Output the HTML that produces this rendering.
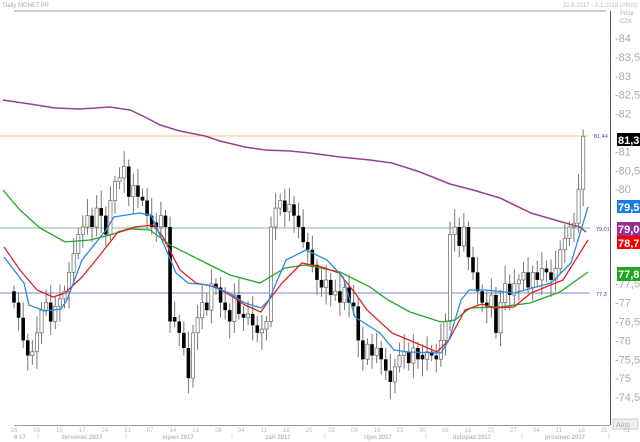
<!DOCTYPE html>
<html><head><meta charset="utf-8"><style>
html,body{margin:0;padding:0;background:#fff;width:640px;height:442px;overflow:hidden}
svg{display:block;font-family:"Liberation Sans",sans-serif}
</style></head><body>
<svg id="s" width="640" height="442" viewBox="0 0 640 442" xmlns="http://www.w3.org/2000/svg">
<rect width="640" height="442" fill="#fff"/>
<text x="3" y="7" font-size="6" fill="#aaa">Daily MONET.PR</text>
<text x="637" y="7" font-size="6" fill="#bbb" text-anchor="end">22.6.2017 - 2.1.2018 (PRG)</text>
<line x1="14" y1="11" x2="606" y2="11" stroke="#999" stroke-width="1"/>
<line x1="610.5" y1="11" x2="610.5" y2="425" stroke="#555" stroke-width="1"/>
<line x1="14" y1="425.5" x2="610" y2="425.5" stroke="#999" stroke-width="1"/>
<text x="620" y="15" font-size="6" fill="#aaa">Price</text>
<text x="620" y="23" font-size="6" fill="#aaa">CZK</text>
<g font-size="11" fill="#aaa" id="yl"></g>
<line x1="0" y1="136" x2="588" y2="136" stroke="#f5c08a" stroke-width="1"/>
<line x1="0" y1="228" x2="590" y2="228" stroke="#7fc27f" stroke-width="1"/>
<line x1="0" y1="293" x2="590" y2="293" stroke="#9a9ae0" stroke-width="1.2"/>
<g id="c"></g>
<polyline fill="none" stroke="#9a3f93" stroke-width="1.5" points="3,100 30,104 55,108 80,109 110,107 130,110 145,117 160,125 180,131 205,136 220,141 245,147 265,150 290,151 310,153 340,157 370,160 392,163 420,172 450,184 473,190 500,198 531,213 555,220 580,227 586,232"/>
<polyline fill="none" stroke="#22a822" stroke-width="1.3" points="3,190 20,210 40,228 65,242 90,240 110,235 130,229 150,230 170,245 200,260 230,275 260,283 285,268 305,265 340,272 370,287 388,300 410,312 441,322 455,320 470,308 500,307 530,303 560,292 588,272"/>
<polyline fill="none" stroke="#e02020" stroke-width="1.3" points="4,247 20,270 37,290 53,297 65,293 82,277 100,255 118,232 135,227 153,225 163,237 180,270 196,283 216,287 233,297 245,305 261,312 269,300 282,283 302,263 322,267 339,273 355,293 367,310 392,333 416,343 437,352 449,340 465,310 482,304 494,308 514,307 531,293 563,280 588,240"/>
<polyline fill="none" stroke="#2a8ae0" stroke-width="1.3" points="4,257 24,283 29,305 45,311 61,309 67,300 82,260 106,230 114,217 139,213 151,215 159,233 176,273 188,283 208,285 229,293 245,303 261,308 269,300 286,260 306,250 327,260 343,277 355,317 380,333 394,350 408,352 441,353 449,340 461,300 469,290 486,290 514,293 551,283 571,263 588,207"/>
<g font-size="5.5" fill="#44a">
<text x="594" y="138">81,44</text><text x="596" y="231">79,01</text><text x="596" y="296">77,3</text>
</g>
<g font-size="11" font-weight="bold">
<rect x="617" y="133" width="23" height="13" fill="#000"/><text x="618" y="144" fill="#fff">81,3</text>
<rect x="617" y="200" width="23" height="13" fill="#1a7be0"/><text x="618" y="211" fill="#fff">79,56</text>
<rect x="617" y="222" width="23" height="14" fill="#9a2f8f"/><text x="618" y="233" fill="#fff">79,06</text>
<rect x="617" y="236" width="23" height="13" fill="#e00"/><text x="618" y="247" fill="#fff">78,7</text>
<rect x="617" y="267" width="23" height="14" fill="#1fa51f"/><text x="618" y="278" fill="#fff">77,8</text>
</g>
<rect x="613" y="419" width="25" height="10" fill="#eee" stroke="#ccc"/>
<text x="616" y="427" font-size="7" fill="#aaa">Auto</text>
<g font-size="6" fill="#bbb" text-anchor="middle" id="xl"></g>
<g font-size="6" fill="#bbb" font-weight="bold" text-anchor="middle">
<text x="20" y="439">6 17</text><text x="82" y="439">červenec 2017</text><text x="178" y="439">srpen 2017</text><text x="278" y="439">září 2017</text><text x="378" y="439">říjen 2017</text><text x="472" y="439">listopad 2017</text><text x="565" y="439">prosinec 2017</text>
</g>
<g stroke="#ddd" stroke-width="1">
<line x1="38" y1="433" x2="38" y2="439"/><line x1="126" y1="433" x2="126" y2="439"/><line x1="232" y1="433" x2="232" y2="439"/><line x1="325" y1="433" x2="325" y2="439"/><line x1="426" y1="433" x2="426" y2="439"/><line x1="522" y1="433" x2="522" y2="439"/><line x1="609" y1="433" x2="609" y2="439"/>
</g>
</svg>
<script>
var NS="http://www.w3.org/2000/svg";
function el(p,t,a,tx){var e=document.createElementNS(NS,t);for(var k in a)e.setAttribute(k,a[k]);if(tx)e.textContent=tx;p.appendChild(e);return e;}
function Y(p){return 38+(84-p)*37.8;}
var yl=document.getElementById('yl');
var labs=["84","83,5","83","82,5","82","81,5","81","80,5","80","79,5","79","78,5","78","77,5","77","76,5","76","75,5","75","74,5"];
for(var i=0;i<labs.length;i++){var p=84-i*0.5;if(labs[i]=="81,5"||labs[i]=="79,5"||labs[i]=="79"||labs[i]=="78,5"||labs[i]=="78")continue;el(yl,'text',{x:615,y:Y(p)+4},'-'+labs[i]);}
var xl=document.getElementById('xl');
var d=["26","03","10","17","24","31","07","14","21","28","04","11","18","25","02","09","16","23","30","06","13","20","27","04","11","18","25","01"];
for(var i=0;i<d.length;i++){el(xl,'text',{x:14+i*22.7,y:432},d[i]);}
var C=[77.0,76.6,76.0,75.6,75.7, 76.2,76.8,77.0,76.5,76.9, 77.1,77.3,77.8,78.3,78.8, 79.0,79.3,79.0,79.5,79.3, 78.8,79.7,80.2,80.3,80.6, 79.8,80.1,79.8,79.7,79.3, 79.0,79.0,79.3,79.0,76.5, 76.5,76.2,75.8,75.0,76.2, 76.6,77.0,76.8,77.5,77.4, 77.0,76.8,76.5,77.2,76.7, 76.6,76.7,76.4,76.2,76.3, 76.5,79.0,79.5,79.7,79.4, 79.6,79.3,79.0,78.6,78.4, 78.0,77.6,77.4,77.6,77.2, 77.3,77.0,77.4,77.0,76.9, 76.0,75.5,75.9,75.6,75.8, 75.5,75.2,74.9,75.3,75.6, 75.7,75.4,75.8,75.5,75.5, 75.7,75.6,75.5,76.0,76.5, 78.8,79.0,78.5,79.0,78.2, 77.8,77.3,77.0,76.9,77.2, 76.2,77.0,77.5,77.2,77.5, 77.6,77.8,77.4,77.8,77.6, 77.9,77.8,77.6,77.9,78.4, 78.7,79.0,79.1,80.0,81.4];
var g=document.getElementById('c');var prev=77.3;
for(var i=0;i<C.length;i++){
 var x=14+i*4.59,c=C[i],o=prev;
 var s=(i*37%11)/11;
 if(Math.abs(c-o)<0.08){o=c+(i%2?0.12:-0.12);}
 var hi=Math.max(o,c)+0.15+s*0.35,lo=Math.min(o,c)-0.15-((i*53%7)/7)*0.35;
 el(g,'line',{x1:x,x2:x,y1:Y(hi),y2:Y(lo),stroke:'#777','stroke-width':1});
 var t=Y(Math.max(o,c)),b=Y(Math.min(o,c));
 if(c>=o)el(g,'rect',{x:x-1.6,y:t,width:3.2,height:Math.max(b-t,1),fill:'#fff',stroke:'#777','stroke-width':0.8});
 else el(g,'rect',{x:x-1.8,y:t,width:3.6,height:Math.max(b-t,1),fill:'#000'});
 prev=c;
}
</script>
</body></html>
